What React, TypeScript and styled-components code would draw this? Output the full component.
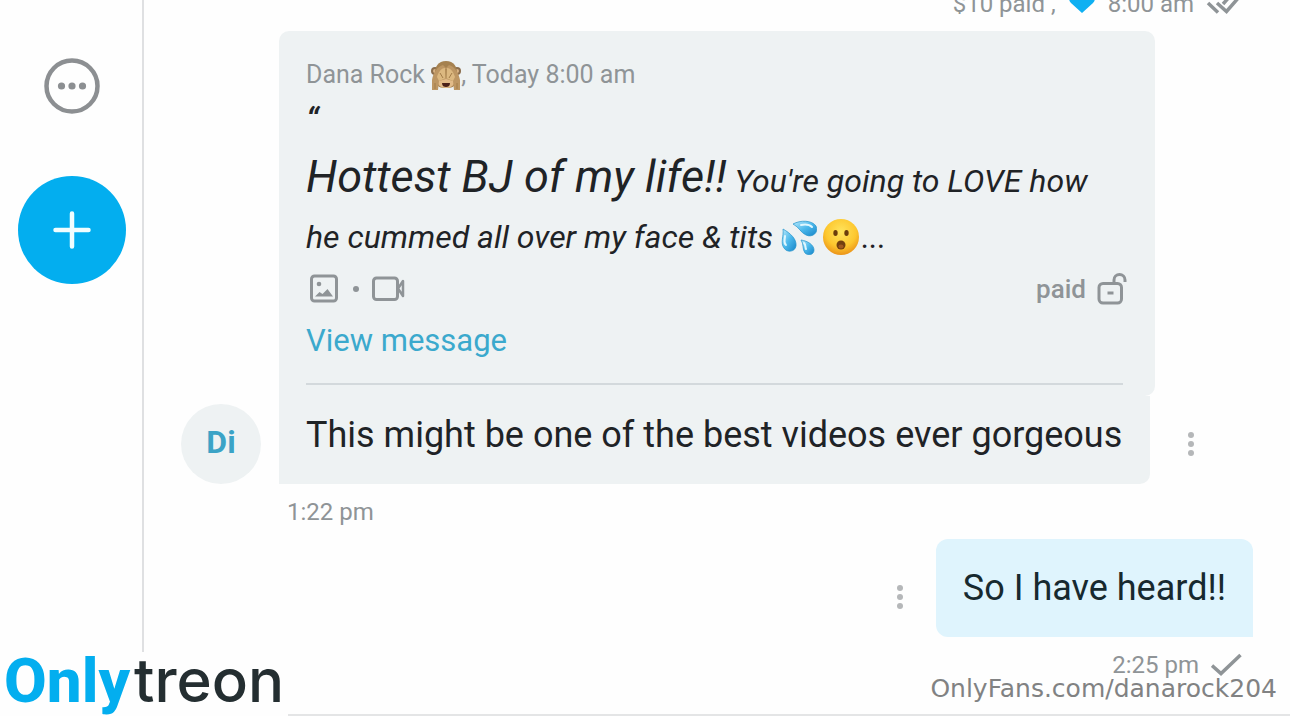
import React from "react";
import styled, { createGlobalStyle } from "styled-components";

const GlobalStyle = createGlobalStyle`
  * { box-sizing: border-box; }
  body { margin: 0; background: #fefefe; }
  p, h1 { margin: 0; }
  button { border: 0; padding: 0; background: none; cursor: pointer; }
  svg { display: block; flex: none; }
`;

const Page = styled.div`
  position: relative;
  display: flex;
  height: 100vh;
  overflow: hidden;
  background: #fefefe;
  color: #1f2326;
  font-family: Roboto, "Liberation Sans", sans-serif;
`;

const Sidebar = styled.nav`
  flex: none;
  width: 144px;
  border-right: 2px solid #dfe0e2;
  padding: 58px 0 0 2px;
  display: flex;
  flex-direction: column;
  align-items: center;
  gap: 62px;
`;

const MoreButton = styled.button`
  width: 56px;
  height: 56px;
`;

const AddButton = styled.button`
  width: 108px;
  height: 108px;
  border-radius: 50%;
  background: #03aeef;
  display: grid;
  place-items: center;
`;

const Chat = styled.main`
  flex: 1;
  min-width: 0;
  display: flex;
  flex-direction: column;
  justify-content: flex-end;
  border-bottom: 2px solid #e4e5e6;
  padding: 0 37px 33px;
`;

const Meta = styled.div<{ $mine?: boolean }>`
  flex: none;
  display: flex;
  align-items: center;
  justify-content: ${(p) => (p.$mine ? "flex-end" : "flex-start")};
  gap: 12px;
  padding: ${(p) => (p.$mine ? "0 11px 0 0" : "0 0 0 106px")};
  margin-top: 12px;
  height: 32px;
  font-size: 24px;
  line-height: 32px;
  color: #8f9497;
`;

const Row = styled.div<{ $mine?: boolean }>`
  flex: none;
  display: flex;
  align-items: flex-end;
  justify-content: ${(p) => (p.$mine ? "flex-end" : "flex-start")};
  margin-top: 11px;
`;

const Avatar = styled.div`
  flex: none;
  width: 80px;
  height: 80px;
  margin-right: 18px;
  border-radius: 50%;
  background: #eef2f3;
  color: #3ba3c6;
  font-size: 32px;
  font-weight: 700;
  line-height: 76px;
  text-align: center;
`;

const Kebab = styled.button`
  flex: none;
  width: 72px;
  height: 80px;
  display: grid;
  place-items: center;
`;

const Thread = styled.article`
  flex: 0 1 876px;
  min-width: 0;
`;

const Quote = styled.section`
  padding: 28px 28px 11px 27px;
  border-radius: 10px 10px 10px 0;
  background: #eef2f3;
`;

const QuoteHeader = styled.header`
  display: flex;
  align-items: center;
  font-size: 25px;
  line-height: 32px;
  color: #8f9497;
  white-space: pre;
`;

const QuoteMark = styled.p`
  height: 58px;
  font-size: 34px;
  font-style: italic;
  font-weight: 500;
  line-height: 56px;
`;

const QuoteText = styled.p`
  font-size: 32px;
  font-style: italic;
  line-height: 56px;

  strong {
    font-size: 45px;
    font-weight: 400;
  }

  svg {
    display: inline-block;
    vertical-align: -7px;
    margin-right: 6px;
  }

  svg:last-of-type {
    margin-right: 3px;
  }
`;

const MediaRow = styled.div`
  display: flex;
  align-items: center;
  height: 48px;
  gap: 11px;
  color: #8f9497;
`;

const Paid = styled.span`
  margin-left: auto;
  font-size: 26px;
  font-weight: 500;
  line-height: 32px;
`;

const ViewLink = styled.a`
  display: block;
  width: fit-content;
  font-size: 31px;
  line-height: 56px;
  color: #3ba9cd;
  text-decoration: none;
`;

const Divider = styled.hr`
  height: 2px;
  margin: 14px 4px 0 0;
  border: 0;
  background: #d3d9dc;
`;

const Reply = styled.p`
  width: fit-content;
  padding: 15px 28px 25px 27px;
  border-radius: 0 0 10px 0;
  background: #eef2f3;
  font-size: 36px;
  line-height: 48px;
`;

const OwnBubble = styled.p`
  padding: 25px 27px;
  border-radius: 12px 12px 0 12px;
  background: #dff4fd;
  color: #17292f;
  font-size: 36px;
  line-height: 48px;
`;

const Logo = styled.h1`
  position: absolute;
  left: 0;
  bottom: 0;
  width: 288px;
  height: 64px;
  padding-left: 4px;
  display: flex;
  align-items: baseline;
  gap: 4px;
  background: #fefefe;
  line-height: 56px;
  white-space: nowrap;
`;

const LogoBlue = styled.span`
  color: #03aeef;
  font-size: 62px;
  font-weight: 800;
`;

const LogoDark = styled.span`
  color: #242e31;
  font-family: Inter, sans-serif;
  font-size: 60px;
  font-weight: 500;
`;

const Watermark = styled.div`
  position: absolute;
  right: 13px;
  bottom: 11px;
  font-family: "DejaVu Sans", sans-serif;
  font-size: 25px;
  line-height: 32px;
  color: #818283;
`;

const DotsIcon = () => (
  <svg width="8" height="24" viewBox="0 0 8 24" fill="#b5b7b9">
    <circle cx="4" cy="3" r="3" />
    <circle cx="4" cy="12" r="3" />
    <circle cx="4" cy="21" r="3" />
  </svg>
);

const KebabButton = () => (
  <Kebab type="button" aria-label="Message options">
    <DotsIcon />
  </Kebab>
);

const CheckIcon = () => (
  <svg width="31" height="24" viewBox="0 0 31 24" fill="none" stroke="#8f9497" strokeWidth="3.500">
    <path d="M1 12.5 10 20.500 29.500 2" />
  </svg>
);

const DoubleCheckIcon = () => (
  <svg width="36" height="24" viewBox="0 0 36 24" fill="none" stroke="#8f9497" strokeWidth="3.500">
    <path d="M2 11 12 20.500M11 11 20.500 19.500 34 4M17 12 26 2" />
  </svg>
);

const HeartIcon = () => (
  <svg width="28" height="20" viewBox="0 0 28 20" fill="#0fb0f2">
    <path d="M14 19 3 9C-1 5 2 0 7 0c3 0 6 1 7 3 1-2 4-3 7-3 5 0 8 5 4 9Z" />
  </svg>
);

const MonkeyIcon = () => (
  <svg width="30" height="30" viewBox="0 0 30 30">
    <circle cx="4" cy="11" r="4" fill="#8b6d4c" />
    <circle cx="26" cy="11" r="4" fill="#8b6d4c" />
    <circle cx="4" cy="11" r="2" fill="#d9b283" />
    <circle cx="26" cy="11" r="2" fill="#d9b283" />
    <path d="M15 1C7 1 4 7 4 13v9c2 5 6 6 11 6s9-1 11-6v-9C26 7 23 1 15 1Z" fill="#a5814f" />
    <path d="M7 18h16v6c-2 3-5 4-8 4s-6-1-8-4Z" fill="#e2bb89" />
    <path d="M11 23h8c0 3-2 4-4 4s-4-1-4-4Z" fill="#4a211a" />
    <path d="M1 30V20C2 13 7 6 12 5l3 3 3-3c5 1 10 8 11 15v10h-6l-1-9-7-2-7 2-1 9Z" fill="#bd9663" />
    <path d="M6 17c1-4 4-9 8-9l1 10-7 3Zm18 0c-1-4-4-9-8-9l-1 10 7 3Z" fill="#dcb880" />
    <path d="m9 13 3 5m9-5-3 5M15 9v9M4 23v6m22-6v6" stroke="#a27c49" />
  </svg>
);

const DropsIcon = () => (
  <svg width="36" height="36" viewBox="0 0 36 36">
    <defs>
      <linearGradient id="drop" x1="0" y1="0" x2="1" y2="1">
        <stop offset="0" stopColor="#b9e9fb" />
        <stop offset=".5" stopColor="#4cb9ec" />
        <stop offset="1" stopColor="#1685c8" />
      </linearGradient>
    </defs>
    <g fill="url(#drop)" stroke="#2494cc" strokeWidth=".7">
      <path d="M12 5c7-4 19-4 23 2 3 7-4 12-10 9C20 14 18 8 12 5Z" />
      <path d="M2 10c7 4 14 10 13 17-1 6-9 7-12 2C-1 24 3 17 2 10Z" />
      <path d="M20 21c7 1 13 5 13 10 0 5-6 6-9 3-3-4-1-9-4-13Z" />
    </g>
    <path d="M20 6c5-1 9 0 11 2M4 17c0 4-2 7 1 9M23 24c2 2 1 4 2 6" fill="none" stroke="#dff7ff" strokeWidth="2" strokeLinecap="round" />
  </svg>
);

const FaceIcon = () => (
  <svg width="36" height="36" viewBox="0 0 36 36">
    <defs>
      <radialGradient id="face" cx=".5" cy=".35" r=".65">
        <stop offset="0" stopColor="#ffe45d" />
        <stop offset=".65" stopColor="#fdc72e" />
        <stop offset="1" stopColor="#eb9419" />
      </radialGradient>
    </defs>
    <circle cx="18" cy="18" r="18" fill="url(#face)" />
    <ellipse cx="12.500" cy="14" rx="2.200" ry="3" fill="#6b3d0c" />
    <ellipse cx="23.500" cy="14" rx="2.200" ry="3" fill="#6b3d0c" />
    <ellipse cx="18" cy="26" rx="4.500" ry="4.500" fill="#73400f" />
    <ellipse cx="18" cy="27.500" rx="2.500" ry="2" fill="#a15a20" />
  </svg>
);

const ImageIcon = () => (
  <svg width="36" height="32" viewBox="0 0 36 32" fill="none" stroke="#8f9497" strokeWidth="3">
    <rect x="5.500" y="3" width="25" height="25" rx="3" />
    <circle cx="13" cy="11" r="2.300" fill="#8f9497" stroke="none" />
    <path d="M9 23.500 13.500 19l3 2 5-5 5.500 7.500Z" fill="#8f9497" stroke="none" />
  </svg>
);

const VideoIcon = () => (
  <svg width="36" height="32" viewBox="0 0 36 32" fill="none" stroke="#8f9497" strokeWidth="3">
    <rect x="3.500" y="5" width="24" height="21.500" rx="3" />
    <path d="m28 15.500 5-7.500v15Z" strokeLinejoin="round" strokeWidth="2.500" />
  </svg>
);

const UnlockIcon = () => (
  <svg width="30" height="34" viewBox="0 0 30 34" fill="none" stroke="#8f9497" strokeWidth="3">
    <rect x="2" y="11.500" width="22.500" height="19.500" rx="4" />
    <path d="M17 11.500V8a5.500 5.500 0 0 1 11 0v2M10.500 21h6" />
  </svg>
);

export default function App() {
  return (
    <Page>
      <GlobalStyle />
      <Sidebar aria-label="Main">
        <MoreButton type="button" aria-label="More">
          <svg width="56" height="56" viewBox="0 0 56 56" fill="#8c8f92">
            <circle cx="28" cy="28" r="25.500" fill="none" stroke="#8c8f92" strokeWidth="4.500" />
            <circle cx="17.500" cy="28" r="3.600" />
            <circle cx="28" cy="28" r="3.600" />
            <circle cx="38.500" cy="28" r="3.600" />
          </svg>
        </MoreButton>
        <AddButton type="button" aria-label="New post">
          <svg width="38" height="38" viewBox="0 0 38 38" stroke="#f0fdff" strokeWidth="4.500" strokeLinecap="round">
            <path d="M19 2.500v33M2.500 19h33" />
          </svg>
        </AddButton>
      </Sidebar>

      <Chat>
        <Meta $mine>
          <span>$10 paid ,</span>
          <HeartIcon />
          <span>8:00 am</span>
          <DoubleCheckIcon />
        </Meta>

        <Row>
          <Avatar>Di</Avatar>
          <Thread>
            <Quote>
              <QuoteHeader>
                <span>Dana Rock </span>
                <MonkeyIcon />
                <span>, Today 8:00 am</span>
              </QuoteHeader>
              <QuoteMark>“</QuoteMark>
              <QuoteText>
                <strong>Hottest BJ of my life!!</strong> You're going to LOVE how he cummed all over my face &amp; tits{" "}
                <DropsIcon />
                <FaceIcon />
                ...
              </QuoteText>
              <MediaRow>
                <ImageIcon />
                <svg width="6" height="6" viewBox="0 0 6 6" fill="#8f9497">
                  <circle cx="3" cy="3" r="3" />
                </svg>
                <VideoIcon />
                <Paid>paid</Paid>
                <UnlockIcon />
              </MediaRow>
              <ViewLink href="#message">View message</ViewLink>
              <Divider />
            </Quote>
            <Reply>This might be one of the best videos ever gorgeous</Reply>
          </Thread>
          <KebabButton />
        </Row>
        <Meta>1:22 pm</Meta>

        <Row $mine>
          <KebabButton />
          <OwnBubble>So I have heard!!</OwnBubble>
        </Row>
        <Meta $mine>
          <span>2:25 pm</span>
          <CheckIcon />
        </Meta>
      </Chat>

      <Logo>
        <LogoBlue>Only</LogoBlue>
        <LogoDark>treon</LogoDark>
      </Logo>
      <Watermark>OnlyFans.com/danarock204</Watermark>
    </Page>
  );
}
